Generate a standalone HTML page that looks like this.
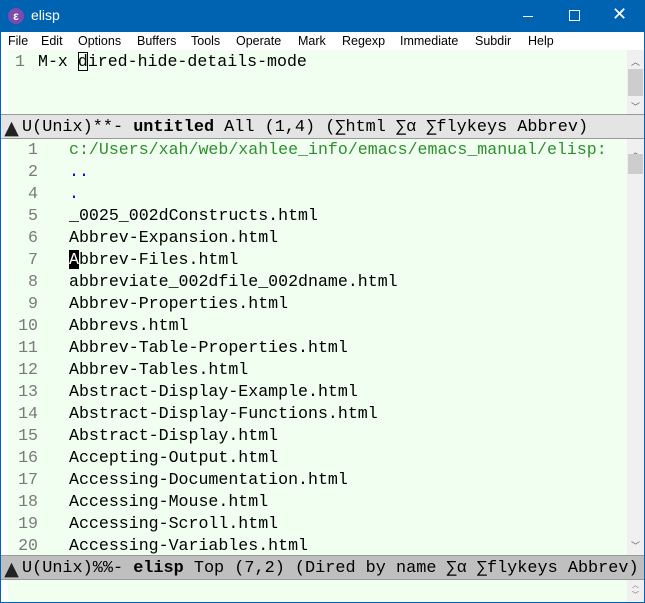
<!DOCTYPE html>
<html><head><style>
*{margin:0;padding:0;box-sizing:border-box}
body{width:645px;height:603px;position:relative;overflow:hidden;background:#fff;font-family:"Liberation Mono",monospace;}
.tb{position:absolute;left:0;top:0;width:645px;height:32px;background:#0063b1;color:#fff;font-family:"Liberation Sans",sans-serif;font-size:14px}
.frame{position:absolute;top:0;bottom:0;width:1px;background:#0063b1}
.menu{position:absolute;top:32px;left:1px;right:1px;height:18px;background:#fff;font-family:"Liberation Sans",sans-serif;font-size:12.5px;color:#000}
.menu span{position:absolute;top:2px}
.pane{position:absolute;left:8px;width:619px;background:#f0fff0}
.sb{position:absolute;left:627px;width:17px;background:#f0f0f0}
.thumb{position:absolute;left:1px;width:15px;background:#cdcdcd}
.arr{position:absolute;left:0;width:17px;text-align:center;font-family:"DejaVu Sans",sans-serif;font-size:9px;color:#606060}
.ml{position:absolute;left:1px;width:643px;height:25px;border-top:1px solid #999;border-bottom:1px solid #999;font-size:16.85px;line-height:26px;white-space:pre;color:#000}
.ml i{font-style:normal;display:inline-block;width:21px;font-family:"DejaVu Sans",sans-serif;font-size:19px;color:#222;vertical-align:top;text-align:center}
.ln{position:absolute;width:30px;text-align:right;color:#7a7a7a;font-size:16.6px;left:8px}
.tx{position:absolute;left:69px;font-size:16.6px;white-space:pre;color:#000}
</style></head><body>
<div class="tb">
<div style="position:absolute;left:8px;top:8px;width:16px;height:16px;border-radius:50%;background:#7b4bb0;color:#fff;font-size:12px;line-height:16px;text-align:center;font-weight:bold">ε</div>
<span style="position:absolute;left:31px;top:7px">elisp</span>
<div style="position:absolute;left:523px;top:16px;width:10px;height:1px;background:#fff"></div>
<div style="position:absolute;left:569px;top:10px;width:11px;height:11px;border:1px solid #fff"></div>
<span style="position:absolute;left:612px;top:4px;font-size:18px;font-family:'DejaVu Sans',sans-serif">✕</span>
</div>
<div class="frame" style="left:0"></div><div class="frame" style="right:0"></div>
<div style="position:absolute;left:0;right:0;bottom:0;height:1px;background:#0063b1"></div>
<div class="menu">
<span style="left:7px">File</span><span style="left:40px">Edit</span><span style="left:77px">Options</span><span style="left:136px">Buffers</span><span style="left:190px">Tools</span><span style="left:235px">Operate</span><span style="left:297px">Mark</span><span style="left:341px">Regexp</span><span style="left:399px">Immediate</span><span style="left:474px">Subdir</span><span style="left:527px">Help</span>
</div>
<div class="pane" style="top:50px;height:64px"></div>
<div class="sb" style="top:50px;height:64px"><div class="arr" style="top:5px">︿</div><div class="thumb" style="top:19px;height:27px"></div><div class="arr" style="top:50px">﹀</div></div>
<div class="ln" style="top:52px;left:-5px">1</div>
<div class="tx" style="left:38px;top:52px">M-x <span style="outline:1px solid #000;outline-offset:-1px">d</span>ired-hide-details-mode</div>
<div class="ml" style="top:114px;background:#e4e4e4"><i>▲</i>U(Unix)**- <b>untitled</b> All (1,4) (∑html ∑α ∑flykeys Abbrev)</div>
<div class="pane" style="top:139px;height:416px"></div>
<div class="sb" style="top:139px;height:416px"><div class="arr" style="top:6px">︿</div><div class="thumb" style="top:15px;height:20px"></div><div class="arr" style="top:400px">﹀</div></div>
<div class="ln" style="top:140px">1</div><div class="tx" style="top:140px;color:#2f8f2f">c:/Users/xah/web/xahlee_info/emacs/emacs_manual/elisp:</div>
<div class="ln" style="top:162px">2</div><div class="tx" style="top:162px;color:#0000e0">..</div>
<div class="ln" style="top:184px">4</div><div class="tx" style="top:184px;color:#0000e0">.</div>
<div class="ln" style="top:206px">5</div><div class="tx" style="top:206px">_0025_002dConstructs.html</div>
<div class="ln" style="top:228px">6</div><div class="tx" style="top:228px">Abbrev-Expansion.html</div>
<div class="ln" style="top:250px">7</div><div class="tx" style="top:250px"><span style="background:#000;color:#fff">A</span>bbrev-Files.html</div>
<div class="ln" style="top:272px">8</div><div class="tx" style="top:272px">abbreviate_002dfile_002dname.html</div>
<div class="ln" style="top:294px">9</div><div class="tx" style="top:294px">Abbrev-Properties.html</div>
<div class="ln" style="top:316px">10</div><div class="tx" style="top:316px">Abbrevs.html</div>
<div class="ln" style="top:338px">11</div><div class="tx" style="top:338px">Abbrev-Table-Properties.html</div>
<div class="ln" style="top:360px">12</div><div class="tx" style="top:360px">Abbrev-Tables.html</div>
<div class="ln" style="top:382px">13</div><div class="tx" style="top:382px">Abstract-Display-Example.html</div>
<div class="ln" style="top:404px">14</div><div class="tx" style="top:404px">Abstract-Display-Functions.html</div>
<div class="ln" style="top:426px">15</div><div class="tx" style="top:426px">Abstract-Display.html</div>
<div class="ln" style="top:448px">16</div><div class="tx" style="top:448px">Accepting-Output.html</div>
<div class="ln" style="top:470px">17</div><div class="tx" style="top:470px">Accessing-Documentation.html</div>
<div class="ln" style="top:492px">18</div><div class="tx" style="top:492px">Accessing-Mouse.html</div>
<div class="ln" style="top:514px">19</div><div class="tx" style="top:514px">Accessing-Scroll.html</div>
<div class="ln" style="top:536px">20</div><div class="tx" style="top:536px">Accessing-Variables.html</div>
<div class="ml" style="top:555px;background:#bfbfbf"><i>▲</i>U(Unix)%%- <b>elisp</b> Top (7,2) (Dired by name ∑α ∑flykeys Abbrev)</div>
<div class="pane" style="top:580px;height:22px"></div>
<div class="sb" style="top:580px;height:22px"><div class="arr" style="top:0px;font-size:7px">︿</div><div class="arr" style="top:10px;font-size:7px">﹀</div></div>
</body></html>
